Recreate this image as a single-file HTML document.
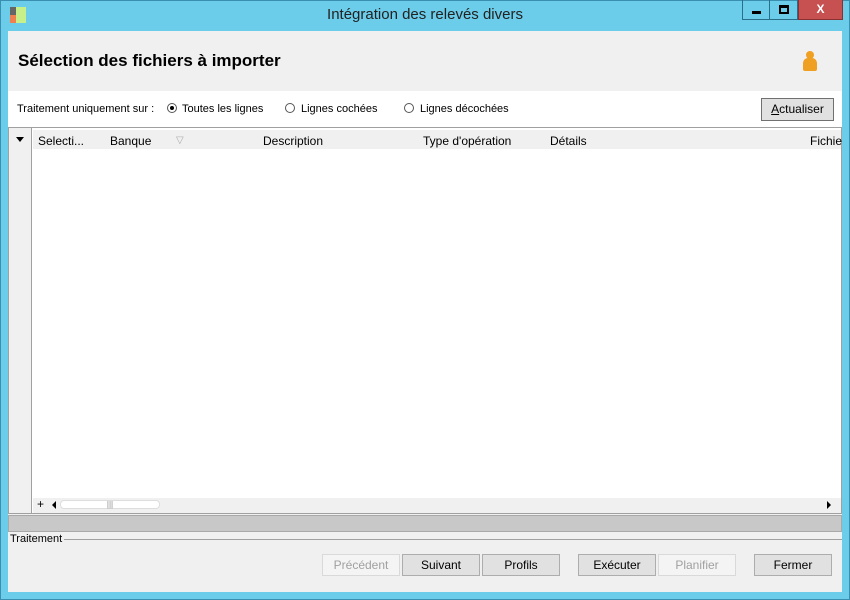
<!DOCTYPE html>
<html><head><style>
*{margin:0;padding:0;box-sizing:border-box}
body{width:850px;height:600px;background:#6bcdea;font-family:"Liberation Sans",sans-serif;position:relative;overflow:hidden;font-size:12px;color:#000}
.a{position:absolute}
.btn{position:absolute;top:554px;height:22px;border:1px solid #adadad;background:#e1e1e1;font-size:12px;text-align:center;line-height:20px}
.dis{background:#f4f4f4;border-color:#d9d9d9;color:#a0a0a0}
.rad{position:absolute;width:10px;height:10px;border:1px solid #555;border-radius:50%;background:#fff}
</style></head><body>
<div class="a" style="left:0;top:0;width:850px;height:600px;border:1px solid #3a8fb0"></div>
<div class="a" style="left:10px;top:7px;width:6px;height:8px;background:#666"></div>
<div class="a" style="left:10px;top:15px;width:6px;height:8px;background:#f08050"></div>
<div class="a" style="left:16px;top:7px;width:10px;height:16px;background:#c8f08a"></div>
<div class="a" style="left:0;top:6px;width:850px;text-align:center;font-size:15px;color:#222">Intégration des relevés divers</div>
<div class="a" style="left:742px;top:0;width:28px;height:20px;border:1px solid #2a6f8a;border-top:none"></div>
<div class="a" style="left:752px;top:11px;width:9px;height:3px;background:#000"></div>
<div class="a" style="left:770px;top:0;width:28px;height:20px;border:1px solid #2a6f8a;border-top:none;border-left:none"></div>
<div class="a" style="left:779px;top:5px;width:10px;height:9px;border:2px solid #000;border-top-width:3px"></div>
<div class="a" style="left:798px;top:0;width:45px;height:20px;background:#c75050;border:1px solid #8a3030;border-top:none;color:#fff;font-weight:bold;text-align:center;font-size:12px;line-height:19px">X</div>
<div class="a" style="left:8px;top:31px;width:834px;height:561px;background:#f0f0f0"></div>
<div class="a" style="left:18px;top:51px;font-size:17px;font-weight:bold">Sélection des fichiers à importer</div>
<div class="a" style="left:806px;top:51px;width:8px;height:8px;border-radius:50%;background:#f0a020"></div>
<div class="a" style="left:803px;top:58px;width:14px;height:13px;border-radius:5px 5px 2px 2px;background:#f0a020"></div>
<div class="a" style="left:8px;top:91px;width:834px;height:37px;background:#fff"></div>
<div class="a" style="left:17px;top:103px;font-size:11px">Traitement uniquement sur :</div>
<div class="rad" style="left:167px;top:103px"><div class="a" style="left:2px;top:2px;width:4px;height:4px;border-radius:50%;background:#000"></div></div>
<div class="a" style="left:182px;top:103px;font-size:11px">Toutes les lignes</div>
<div class="rad" style="left:285px;top:103px"></div>
<div class="a" style="left:301px;top:103px;font-size:11px">Lignes cochées</div>
<div class="rad" style="left:404px;top:103px"></div>
<div class="a" style="left:420px;top:103px;font-size:11px">Lignes décochées</div>
<div class="a" style="left:761px;top:98px;width:73px;height:23px;border:1px solid #707070;background:#e1e1e1;text-align:center;line-height:21px;font-size:12px"><u>A</u>ctualiser</div>
<div class="a" style="left:8px;top:127px;width:834px;height:387px;background:#fff;border:1px solid #a0a0a0"></div>
<div class="a" style="left:9px;top:128px;width:23px;height:385px;background:#f0f0f0;border-right:1px solid #a0a0a0"></div>
<div class="a" style="left:33px;top:130px;width:808px;height:19px;background:#f0f0f0"></div>
<div class="a" style="left:16px;top:137px;border-left:4px solid transparent;border-right:4px solid transparent;border-top:5px solid #000"></div>
<div class="a" style="left:38px;top:134px">Selecti...</div>
<div class="a" style="left:110px;top:134px">Banque</div>
<div class="a" style="left:176px;top:135px;color:#aaa;font-size:10px">▽</div>
<div class="a" style="left:263px;top:134px">Description</div>
<div class="a" style="left:423px;top:134px">Type d'opération</div>
<div class="a" style="left:550px;top:134px">Détails</div>
<div class="a" style="left:810px;top:134px">Fichie</div>
<div class="a" style="left:33px;top:498px;width:808px;height:15px;background:#f0f0f0"></div>
<div class="a" style="left:37px;top:497px;font-size:12px">+</div>
<div class="a" style="left:60px;top:500px;width:100px;height:9px;background:#fff;border-radius:4px;border:1px solid #ddd;text-align:center;font-size:8px;line-height:7px;color:#888">|||</div>
<div class="a" style="left:52px;top:501px;border-top:4px solid transparent;border-bottom:4px solid transparent;border-right:4px solid #000"></div>
<div class="a" style="left:827px;top:501px;border-top:4px solid transparent;border-bottom:4px solid transparent;border-left:4px solid #000"></div>
<div class="a" style="left:8px;top:515px;width:834px;height:17px;background:#c8c8c8;border:1px solid #a8a8a8"></div>
<div class="a" style="left:10px;top:533px;font-size:11px">Traitement</div>
<div class="a" style="left:64px;top:539px;width:778px;height:1px;background:#a0a0a0"></div>
<div class="btn dis" style="left:322px;width:78px">Précédent</div>
<div class="btn" style="left:402px;width:78px">Suivant</div>
<div class="btn" style="left:482px;width:78px">Profils</div>
<div class="btn" style="left:578px;width:78px">Exécuter</div>
<div class="btn dis" style="left:658px;width:78px">Planifier</div>
<div class="btn" style="left:754px;width:78px">Fermer</div>
</body></html>
